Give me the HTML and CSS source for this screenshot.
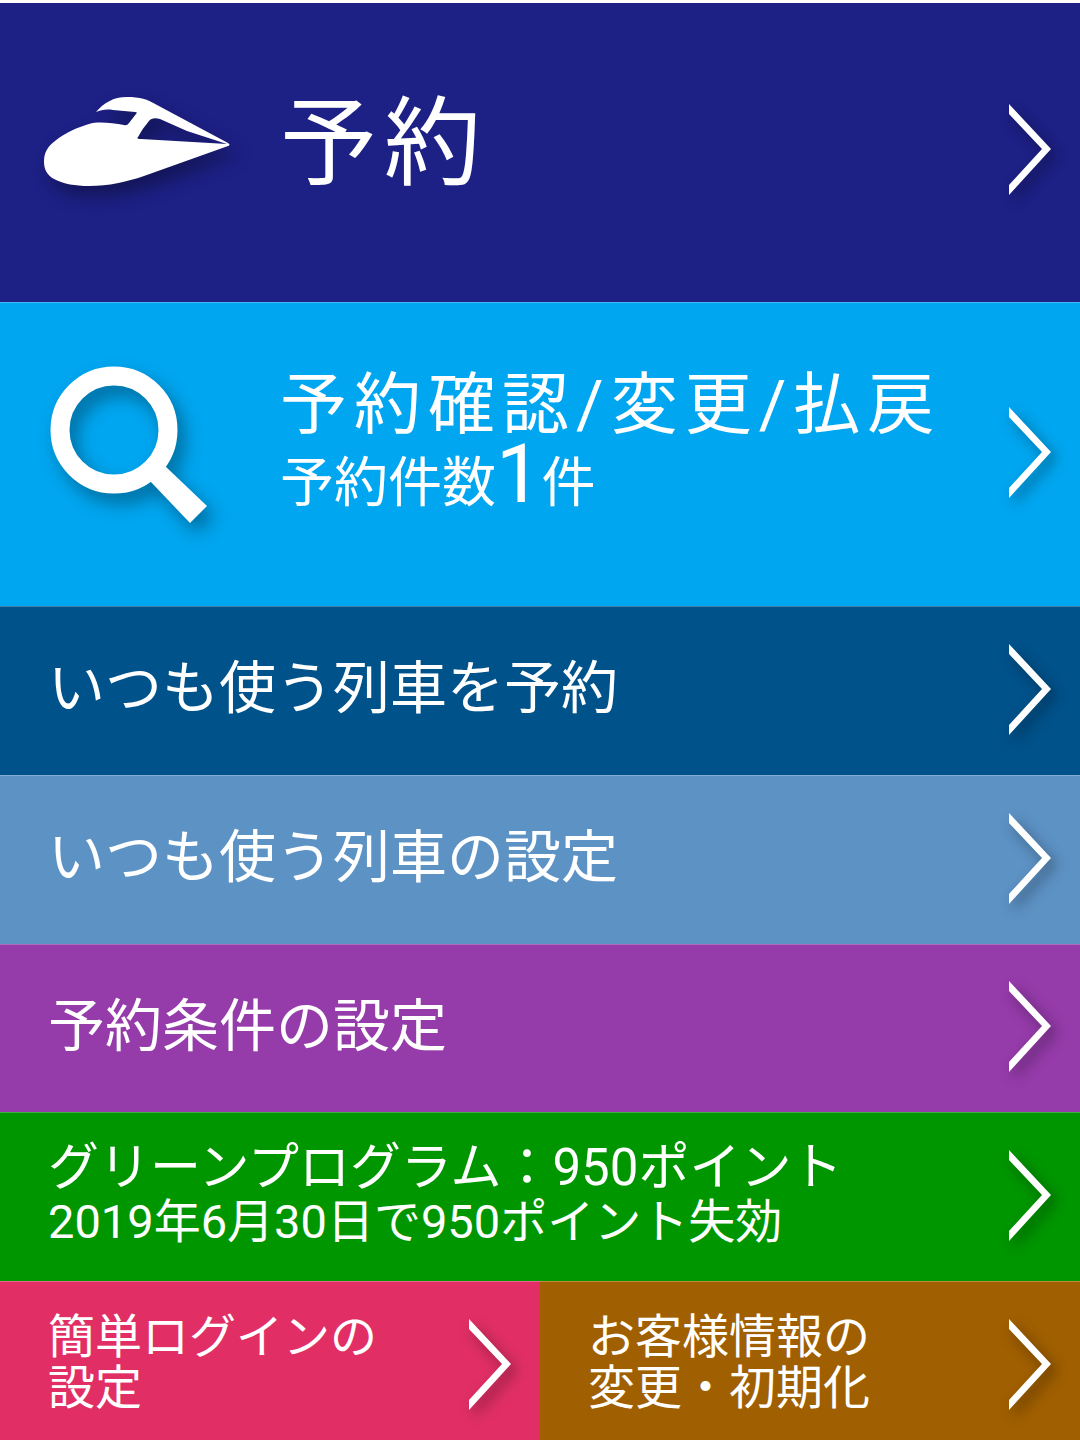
FILE: index.html
```
<!DOCTYPE html>
<html lang="ja">
<head>
<meta charset="utf-8">
<meta name="viewport" content="width=device-width">
<title>予約</title>
<link rel="stylesheet" href="styles.css">
</head>
<body>
<svg width="0" height="0" class="defs">
  <symbol id="arrow" viewBox="0 0 42 91">
    <path d="M0 0 L42 45 L0 91 V81 L33 45 L0 10 Z" />
  </symbol>
</svg>
<nav class="menu">
  <a href="#reserve" class="item large reserve">
    <span class="icon">
      <svg class="train" width="186" height="90" viewBox="0 0 186 90">
        <path fill-rule="evenodd" d="M52 15 C60 6 69 0 83 0 C96 0 103 2 113 8 L184 46 Q187 48 184 49 L100 79 C82 85 65 89 45 89 C31 89 20 87 10 82 C3 78 0 72 0 65 C0 56 3 50 11 44 C22 35 35 30 45 27 C54 24 68 26 80 28 Q83 29 85 26 L92 17 Q94 15 91 15 L69 13 C62 12 57 13 52 15 Z M94 40 Q98 32 105 24 Q108 20 116 22 L143 34 L183 47 L97 42 Q92 42 94 40 Z" />
      </svg>
    </span>
    <span class="text title">予約</span>
    <svg class="arrow"><use href="#arrow" /></svg>
  </a>
  <a href="#confirm" class="item large confirm">
    <span class="icon">
      <svg class="search" width="158" height="158" viewBox="0 0 158 158">
        <circle cx="64" cy="64" r="54" />
        <path d="M100 115 L114 99 L157 140 L140 157 Z" />
      </svg>
    </span>
    <span class="text">
      <span class="subtitle">予約確認/変更/払戻</span>
      <span class="count">予約件数<b>1</b>件</span>
    </span>
    <svg class="arrow"><use href="#arrow" /></svg>
  </a>
  <a href="#usual" class="item usual">
    <span class="text">いつも使う列車を予約</span>
    <svg class="arrow"><use href="#arrow" /></svg>
  </a>
  <a href="#usual-setting" class="item usual-setting">
    <span class="text">いつも使う列車の設定</span>
    <svg class="arrow"><use href="#arrow" /></svg>
  </a>
  <a href="#condition" class="item condition">
    <span class="text">予約条件の設定</span>
    <svg class="arrow"><use href="#arrow" /></svg>
  </a>
  <a href="#point" class="item point">
    <span class="text">グリーンプログラム：950ポイント<small>2019年6月30日で950ポイント失効</small></span>
    <svg class="arrow"><use href="#arrow" /></svg>
  </a>
  <div class="half">
    <a href="#login" class="item login">
      <span class="text">簡単ログインの<br>設定</span>
      <svg class="arrow"><use href="#arrow" /></svg>
    </a>
    <a href="#member" class="item member">
      <span class="text">お客様情報の<br>変更・初期化</span>
      <svg class="arrow"><use href="#arrow" /></svg>
    </a>
  </div>
</nav>
</body>
</html>
```

FILE: styles.css
```
* {
	box-sizing:border-box;
}
body {
	margin:0;
	padding-top:3px;
	background-color:#fff;
	font-family:Roboto, "Noto Sans CJK JP", sans-serif;
	color:#fff;
}
.defs {
	position:absolute;
}
.item {
	display:flex;
	align-items:center;
	min-height:169px;
	padding:0 29px 4px 48px;
	border-top:1px solid rgba(255,255,255,.25);
	font-size:57px;
	line-height:60px;
	color:#fff;
	text-decoration:none;
}
.text {
	flex:1;
	white-space:nowrap;
}
.arrow {
	flex:none;
	width:42px;
	height:91px;
	fill:#fff;
	overflow:visible;
	filter:drop-shadow(5px 6px 7px rgba(0,0,0,.4));
}
/* 上の2つの大きいボタン */
.large {
	min-height:304px;
	padding-left:44px;
}
.large .text {
	padding-bottom:10px;
}
.large .title {
	padding-bottom:12px;
}
.icon {
	flex:none;
	width:236px;
	padding-bottom:16px;
}
.icon svg {
	display:block;
	overflow:visible;
	filter:drop-shadow(7px 10px 9px rgba(0,0,0,.35));
}
.train {
	fill:#fff;
}
.search {
	margin-left:6px;
}
.search circle {
	fill:none;
	stroke:#fff;
	stroke-width:19px;
}
.search path {
	fill:#fff;
}
.reserve {
	min-height:299px;
	padding-bottom:6px;
	border-top:0;
	background-color:#1d2085;
}
.title {
	font-size:97px;
	line-height:100px;
	letter-spacing:7px;
}
.confirm {
	background-color:#00a6f0;
}
.subtitle, .count {
	display:block;
}
.subtitle {
	font-size:67px;
	line-height:64px;
	letter-spacing:7px;
}
.count {
	font-size:54px;
	line-height:76px;
}
.count b {
	font-size:81px;
	font-weight:normal;
}
.usual {
	background-color:#00528b;
}
.usual-setting {
	background-color:#5d92c5;
}
.condition {
	min-height:168px;
	background-color:#953baa;
}
.point {
	background-color:#009600;
	font-size:51px;
	line-height:54px;
}
.point small {
	display:block;
	font-size:47px;
}
.half {
	display:grid;
	grid-template-columns:1fr 1fr;
}
.half .item {
	min-height:159px;
	padding-top:6px;
	padding-bottom:0;
	font-size:47px;
	line-height:51px;
}
.half .text {
	padding-bottom:4px;
}
.login {
	background-color:#e12f65;
}
.member {
	background-color:#a05f00;
}
```
